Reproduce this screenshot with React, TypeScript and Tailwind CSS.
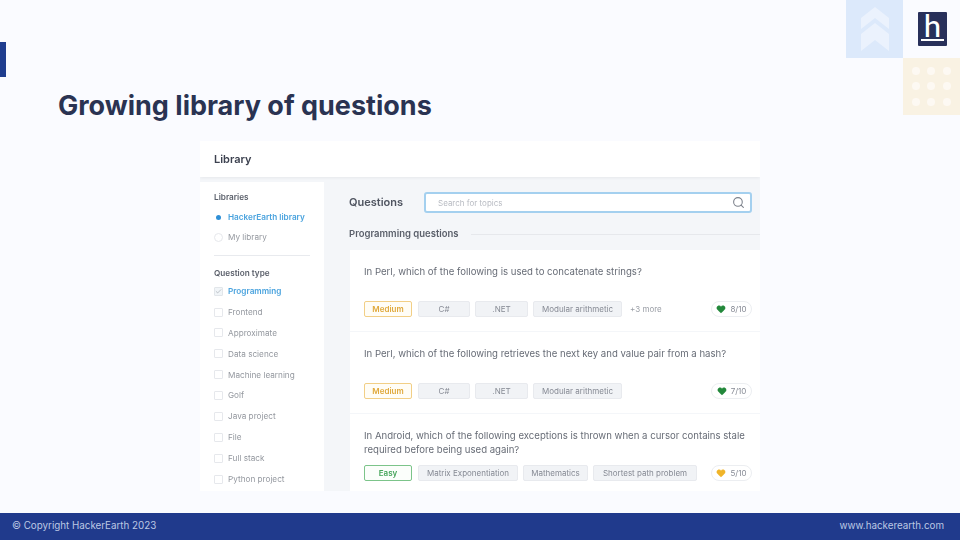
import { Search, Heart, Check } from "lucide-react";

const filters = ["Frontend", "Approximate", "Data science", "Machine learning", "Golf", "Java project", "File", "Full stack", "Python project"];

function Tag({ label, w }: { label: string; w: string }) {
  return (
    <span className={`flex h-[16px] items-center justify-center whitespace-nowrap rounded-[2px] border border-[#e8eaee] bg-[#f1f3f6] text-[8px] text-[#868a94] ${w}`}>
      {label}
    </span>
  );
}

function Level({ label, tone }: { label: string; tone: "medium" | "easy" }) {
  const cls = tone === "medium" ? "border-[#f2cf86] bg-[#fffdf6] text-[#e0a93c]" : "border-[#7cc48a] bg-[#fbfefb] text-[#45a45a]";
  return (
    <span className={`mr-px flex h-[16px] w-[48px] items-center justify-center rounded-[2px] border text-[8px] font-semibold ${cls}`}>
      {label}
    </span>
  );
}

function Score({ value, color }: { value: string; color: string }) {
  return (
    <span className="ml-auto flex h-[16px] w-[41px] items-center justify-center gap-[4px] rounded-full border border-[#eceef1] bg-white text-[8px] text-[#868a94]">
      <Heart size={10} strokeWidth={1} style={{ color, fill: color }} />
      {value}
    </span>
  );
}

export default function App() {
  return (
    <div className="flex h-[540px] w-[960px] flex-col overflow-hidden bg-[#fafbff] font-['Inter',sans-serif]">
      <header className="flex h-[141px] shrink-0">
        <div className="flex-1">
          <div className="mt-[42px] h-[35px] w-[6px] bg-[#1f3d8f]" />
          <h1 className="ml-[58px] mt-[12px] text-[27px] font-bold leading-[34px] text-[#2a3352]">Growing library of questions</h1>
        </div>
        <div className="grid h-[115px] w-[114px] grid-cols-[57px_57px] grid-rows-[58px_57px]">
          <div className="flex items-center justify-center bg-[#dce9fb]">
            <svg width="28" height="44" viewBox="0 0 28 44" fill="#ebf2fd">
              <polygon points="14,0 28,11 28,22 14,11 0,22 0,11" />
              <polygon points="14,16 28,27 28,44 14,33 0,44 0,27" />
            </svg>
          </div>
          <div className="flex items-start justify-center pl-[2px] pt-[12px]">
            <div className="flex h-[34px] w-[29px] flex-col items-center rounded-[1px] bg-[#28305a]">
              <span className="mt-[-1px] h-[26px] font-['Lato',sans-serif] text-[31px] font-medium leading-[28px] text-white">h</span>
              <span className="mt-[2px] h-[2px] w-[23px] bg-white" />
            </div>
          </div>
          <div />
          <div className="grid grid-cols-3 place-items-center bg-[#f9f2e3] px-[5px] py-[5px]">
            {Array.from({ length: 9 }).map((_, i) => (
              <span key={i} className="h-[8px] w-[8px] rounded-full bg-[#fdf9f3]" />
            ))}
          </div>
        </div>
      </header>

      <section className="ml-[200px] flex h-[350px] w-[560px] shrink-0 flex-col overflow-hidden bg-[#f4f6f9] blur-[0.7px]">
        <div className="flex h-[36px] shrink-0 items-center bg-white pl-[14px] text-[11px] font-semibold text-[#3d4250] shadow-[0_1px_3px_rgba(0,0,0,0.06)]">
          Library
        </div>
        <div className="flex min-h-0 flex-1">
          <aside className="mt-[5px] w-[124px] shrink-0 bg-white pl-[14px] pt-[9px]">
            <div className="flex h-[12px] items-center text-[8.2px] font-semibold text-[#5a5f6a]">Libraries</div>
            <div className="mt-[8px] flex h-[12px] items-center gap-[5px] text-[8.2px] font-semibold text-[#4aa3de]">
              <span className="flex h-[9px] w-[9px] items-center justify-center">
                <span className="h-[5px] w-[5px] rounded-full bg-[#2f8fd6]" />
              </span>
              HackerEarth library
            </div>
            <div className="mt-[8px] flex h-[12px] items-center gap-[5px] text-[8.2px] text-[#94989f]">
              <span className="h-[9px] w-[9px] rounded-full border border-[#e6e8ec]" />
              My library
            </div>
            <div className="mt-[12px] h-px w-[96px] bg-[#e8eaee]" />
            <div className="mt-[11px] flex h-[12px] items-center text-[8.2px] font-semibold text-[#5a5f6a]">Question type</div>
            <div className="mt-[6px] flex h-[12px] items-center gap-[5px] text-[8.2px] font-semibold text-[#4aa3de]">
              <span className="flex h-[9px] w-[9px] items-center justify-center rounded-[1px] border border-[#e2e6ea] bg-[#f1f5f8]">
                <Check size={7} strokeWidth={1.5} className="text-[#7d828c]" />
              </span>
              Programming
            </div>
            <div className="mt-[9px] flex flex-col gap-[8.9px]">
              {filters.map((f) => (
                <div key={f} className="flex h-[12px] items-center gap-[5px] text-[8.2px] text-[#94989f]">
                  <span className="h-[9px] w-[9px] rounded-[1px] border border-[#e6e8ec]" />
                  {f}
                </div>
              ))}
            </div>
          </aside>

          <main className="min-w-0 flex-1 pl-[25px] pt-[15px]">
            <div className="flex h-[21px] items-center">
              <span className="w-[75px] text-[11px] font-semibold text-[#4f5460]">Questions</span>
              <div className="flex h-[21px] w-[328px] items-center justify-between rounded-[3px] border-2 border-[#a4d0ef] bg-white pl-[12px] pr-[5px] text-[8px] text-[#b8bbc2]">
                Search for topics
                <Search size={13} strokeWidth={2} className="text-[#7d828c]" />
              </div>
            </div>
            <div className="mt-[14px] flex h-[14px] items-center gap-[12px]">
              <span className="whitespace-nowrap text-[9.5px] font-semibold text-[#5a5f6a]">Programming questions</span>
              <span className="h-px flex-1 bg-[#e6e8ec]" />
            </div>
            <div className="ml-px mt-[9px] flex flex-col gap-px">
              <article className="flex h-[81px] flex-col justify-between bg-white px-[14px] pb-[14px] pt-[15px]">
                <p className="text-[9.6px] leading-[14px] text-[#676c76]">In Perl, which of the following is used to concatenate strings?</p>
                <div className="flex items-center gap-[5px]">
                  <Level label="Medium" tone="medium" />
                  <Tag label="C#" w="w-[52px]" />
                  <Tag label=".NET" w="w-[53px]" />
                  <Tag label="Modular arithmetic" w="w-[89px]" />
                  <span className="ml-[3px] text-[8px] text-[#9a9ea6]">+3 more</span>
                  <div className="ml-auto flex w-[41px] -mr-[6px]"><Score value="8/10" color="#23883b" /></div>
                </div>
              </article>
              <article className="flex h-[81px] flex-col justify-between bg-white px-[14px] pb-[14px] pt-[15px]">
                <p className="text-[9.6px] leading-[14px] text-[#676c76]">In Perl, which of the following retrieves the next key and value pair from a hash?</p>
                <div className="flex items-center gap-[5px]">
                  <Level label="Medium" tone="medium" />
                  <Tag label="C#" w="w-[52px]" />
                  <Tag label=".NET" w="w-[53px]" />
                  <Tag label="Modular arithmetic" w="w-[89px]" />
                  <div className="ml-auto flex w-[41px] -mr-[6px]"><Score value="7/10" color="#23883b" /></div>
                </div>
              </article>
              <article className="h-[77px] bg-white px-[14px] pt-[15px]">
                <p className="w-[390px] text-[9.6px] leading-[14px] text-[#676c76]">
                  In Android, which of the following exceptions is thrown when a cursor contains stale required before being used again?
                </p>
                <div className="mt-[8px] flex items-center gap-[5px]">
                  <Level label="Easy" tone="easy" />
                  <Tag label="Matrix Exponentiation" w="w-[100px]" />
                  <Tag label="Mathematics" w="w-[65px]" />
                  <Tag label="Shortest path problem" w="w-[104px]" />
                  <div className="ml-auto flex w-[41px] -mr-[6px]"><Score value="5/10" color="#f0b429" /></div>
                </div>
              </article>
            </div>
          </main>
        </div>
      </section>

      <div className="flex-1" />
      <footer className="flex h-[27px] shrink-0 items-center justify-between bg-[#203a8c] px-[12px] pr-[16px] text-[9.8px] text-[#bcc8e4]">
        <span>© Copyright HackerEarth 2023</span>
        <span>www.hackerearth.com</span>
      </footer>
    </div>
  );
}
